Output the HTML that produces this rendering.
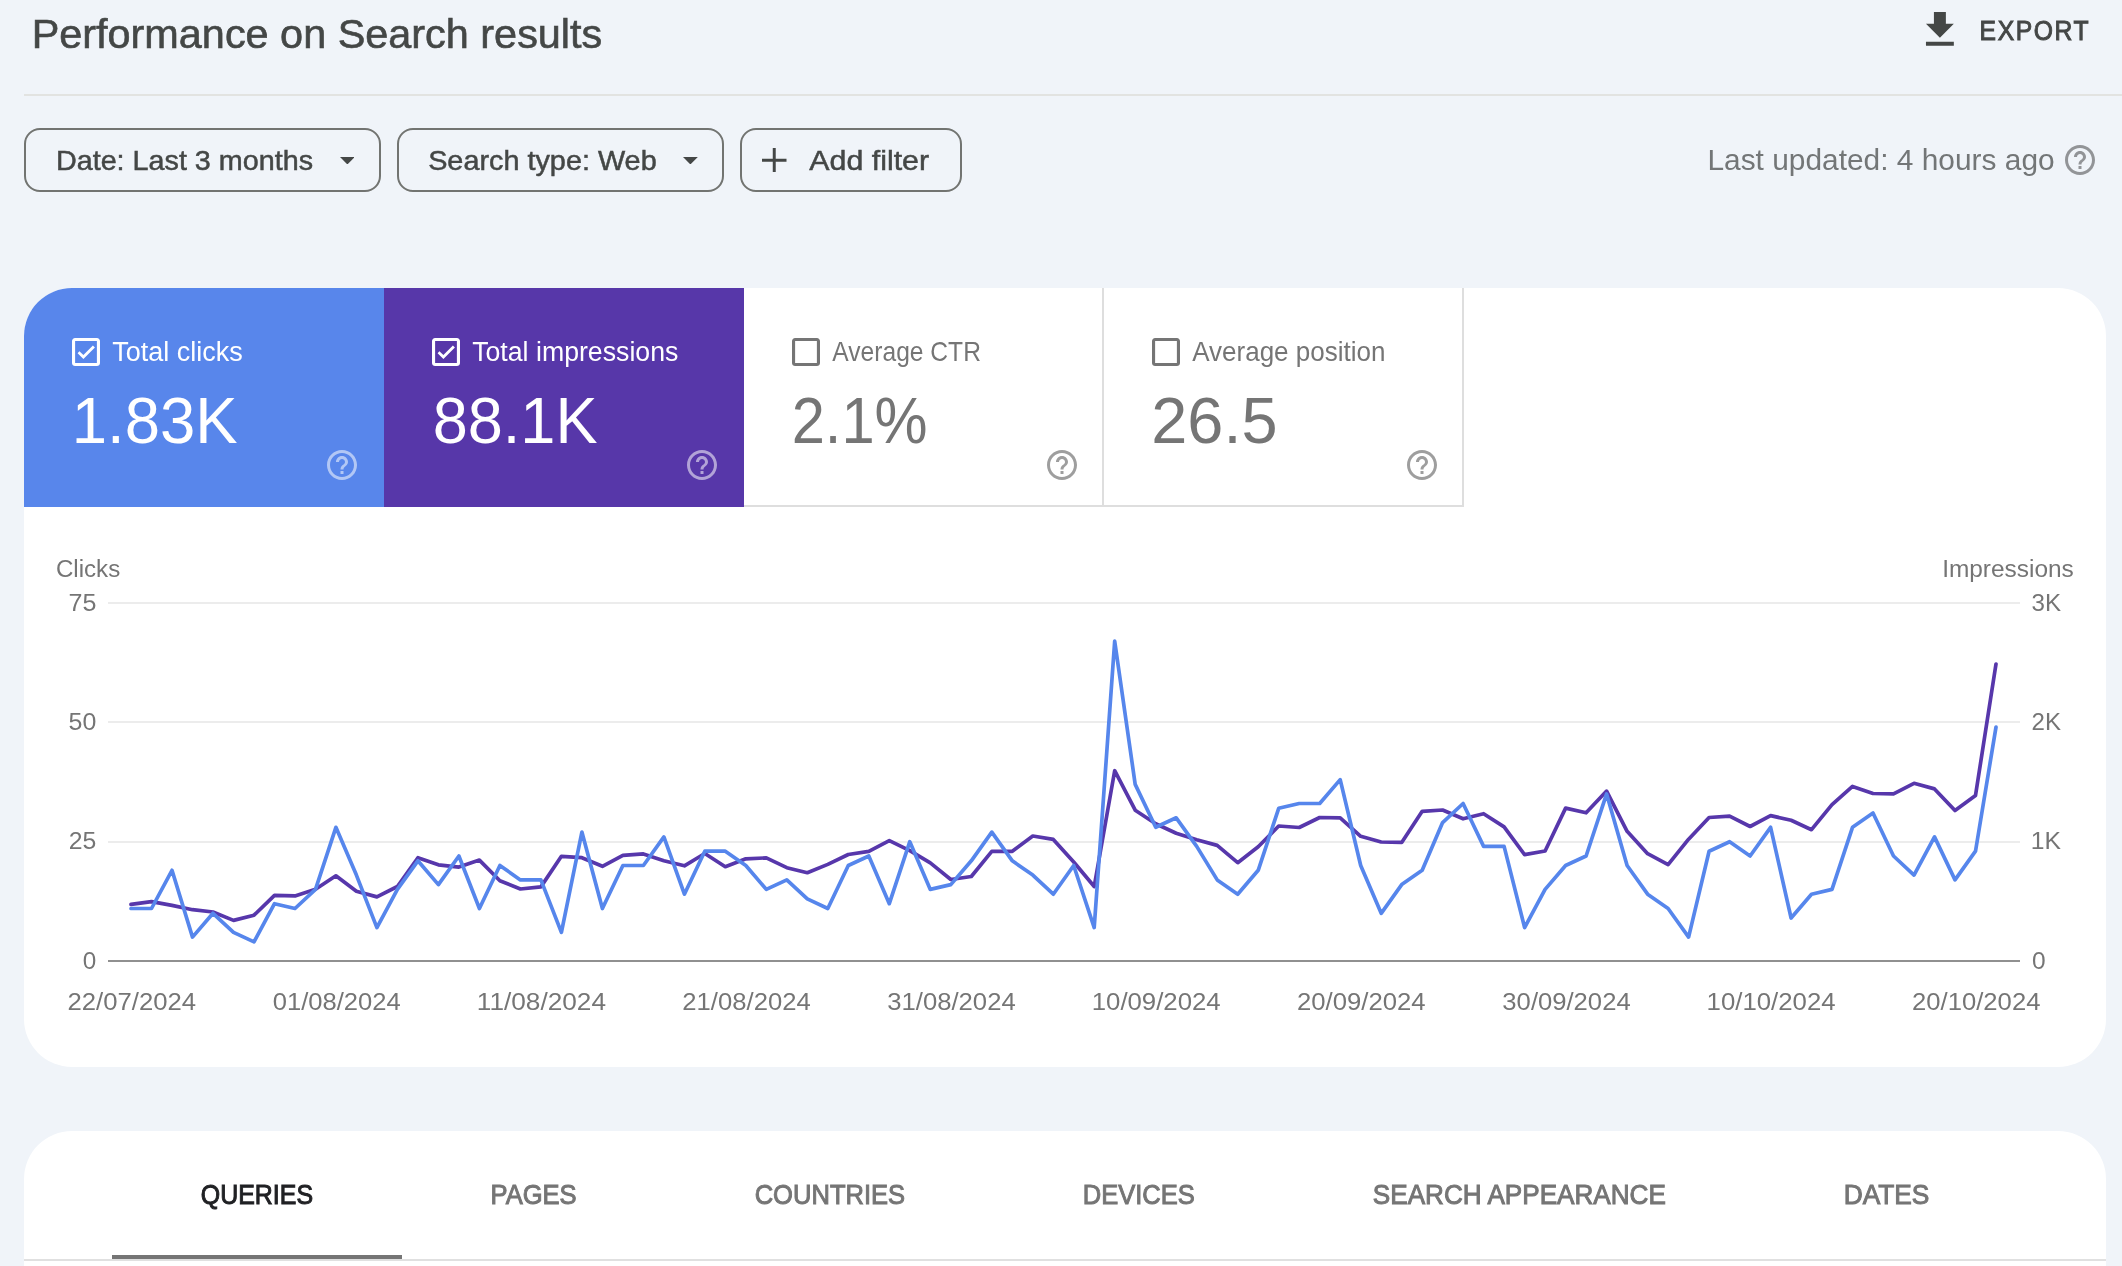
<!DOCTYPE html>
<html><head><meta charset="utf-8"><title>Performance on Search results</title>
<style>
html,body{margin:0;padding:0;}
html{width:2122px;height:1266px;overflow:hidden;background:#f0f4f9;}
body{width:2122px;height:1266px;overflow:hidden;background:#f0f4f9;position:relative;font-family:"Liberation Sans", sans-serif;}
.a{position:absolute;display:block;}
.chip{position:absolute;top:128px;height:60px;border:2px solid #727471;border-radius:16px;box-sizing:content-box;}
.card{position:absolute;left:24px;width:2082px;background:#fff;border-radius:48px;}
</style></head><body>
<div class="a" style="left:24px;top:94px;width:2098px;height:2px;background:#e2e3e1"></div>

<!-- export icon -->
<svg class="a" style="left:1915.6px;top:6.15px" width="47.8" height="47.6" viewBox="0 0 24 24" preserveAspectRatio="none"><path fill="#444746" d="M19 9h-4V3H9v6H5l7 7 7-7zM5 18v2h14v-2H5z"/></svg>

<!-- chips -->
<div class="chip" style="left:24px;width:353px"></div>
<div class="chip" style="left:397px;width:323px"></div>
<div class="chip" style="left:740px;width:218px"></div>
<svg class="a" style="left:339.5px;top:156.9px" width="14.8" height="7.5" viewBox="0 0 10 5"><path fill="#444746" d="M0 0h10L5 5z"/></svg>
<svg class="a" style="left:683.2px;top:156.9px" width="14.8" height="7.5" viewBox="0 0 10 5"><path fill="#444746" d="M0 0h10L5 5z"/></svg>
<svg class="a" style="left:762.2px;top:147.8px" width="24.5" height="24.5" viewBox="0 0 24 24"><path fill="#444746" d="M10.550 0h2.900v10.550H24v2.900H13.450V24h-2.900V13.450H0v-2.900h10.550z"/></svg>

<!-- card 1 -->
<div class="card" style="top:288px;height:779px;overflow:hidden">
  <div class="a" style="left:0;top:0;width:360px;height:219px;background:#5886eb"></div>
  <div class="a" style="left:360px;top:0;width:360px;height:219px;background:#5737a9"></div>
  <div class="a" style="left:720px;top:0;width:718px;height:217px;border-right:2px solid #dedede;border-bottom:2px solid #dedede"></div>
  <div class="a" style="left:1078px;top:0;width:2px;height:217px;background:#dedede"></div>
</div>
<!-- card 2 -->
<div class="card" style="top:1131px;height:135px;border-radius:48px 48px 0 0"></div>
<div class="a" style="left:24px;top:1259px;width:2082px;height:2px;background:#e0e0e0"></div>
<div class="a" style="left:112px;top:1255px;width:290px;height:4px;background:#757575"></div>

<!-- chart -->
<svg class="a" style="left:0;top:0" width="2122" height="1266" viewBox="0 0 2122 1266">
  <g fill="#ececec">
    <rect x="108" y="602" width="1912" height="2"/>
    <rect x="108" y="721" width="1912" height="2"/>
    <rect x="108" y="841" width="1912" height="2"/>
  </g>
  <rect x="108" y="960" width="1912" height="2" fill="#909090"/>
  <polyline fill="none" stroke="#5737ab" stroke-width="3.7" stroke-linejoin="round" stroke-linecap="round" points="131.0,904.4 151.5,901.6 172.0,905.4 192.5,909.7 213.0,912.0 233.5,920.4 254.0,915.2 274.5,895.4 295.0,895.9 315.5,889.3 335.9,875.8 356.4,891.2 376.9,896.9 397.4,886.5 417.9,857.7 438.4,864.8 458.9,867.1 479.4,860.1 499.9,880.8 520.4,889.0 540.9,886.9 561.4,856.3 581.9,857.7 602.4,866.3 622.9,855.4 643.4,853.9 663.9,860.7 684.4,865.8 704.8,853.5 725.3,866.7 745.8,858.8 766.3,857.9 786.8,867.7 807.3,872.7 827.8,864.4 848.3,854.5 868.8,851.3 889.3,840.7 909.8,850.7 930.3,862.9 950.8,879.5 971.3,876.5 991.8,851.3 1012.3,851.3 1032.8,836.0 1053.3,839.4 1073.7,862.0 1094.2,886.5 1114.7,770.7 1135.2,810.2 1155.7,823.7 1176.2,833.3 1196.7,839.8 1217.2,845.4 1237.7,862.7 1258.2,846.7 1278.7,826.0 1299.2,827.5 1319.7,817.5 1340.2,817.9 1360.7,836.3 1381.2,842.0 1401.7,842.4 1422.2,811.3 1442.6,810.0 1463.1,818.8 1483.6,813.7 1504.1,826.9 1524.6,854.6 1545.1,851.0 1565.6,808.1 1586.1,812.8 1606.6,791.1 1627.1,831.3 1647.6,853.7 1668.1,864.6 1688.6,839.2 1709.1,817.5 1729.6,816.2 1750.1,826.5 1770.6,815.6 1791.1,820.3 1811.5,829.7 1832.0,804.7 1852.5,786.4 1873.0,793.5 1893.5,793.8 1914.0,783.3 1934.5,788.9 1955.0,810.6 1975.5,795.5 1996.0,664.0"/>
  <polyline fill="none" stroke="#5686ec" stroke-width="3.7" stroke-linejoin="round" stroke-linecap="round" points="131.0,908.5 151.5,908.5 172.0,870.3 192.5,937.1 213.0,913.3 233.5,932.4 254.0,941.9 274.5,903.7 295.0,908.5 315.5,889.4 335.9,827.3 356.4,875.1 376.9,927.6 397.4,889.4 417.9,860.8 438.4,884.6 458.9,856.0 479.4,908.5 499.9,865.5 520.4,879.9 540.9,879.9 561.4,932.4 581.9,832.1 602.4,908.5 622.9,865.5 643.4,865.5 663.9,836.9 684.4,894.2 704.8,851.2 725.3,851.2 745.8,865.5 766.3,889.4 786.8,879.9 807.3,898.9 827.8,908.5 848.3,865.5 868.8,856.0 889.3,903.7 909.8,841.7 930.3,889.4 950.8,884.6 971.3,860.8 991.8,832.1 1012.3,860.8 1032.8,875.1 1053.3,894.2 1073.7,865.5 1094.2,927.6 1114.7,641.2 1135.2,784.4 1155.7,827.3 1176.2,817.8 1196.7,846.4 1217.2,879.9 1237.7,894.2 1258.2,870.3 1278.7,808.3 1299.2,803.5 1319.7,803.5 1340.2,779.6 1360.7,865.5 1381.2,913.3 1401.7,884.6 1422.2,870.3 1442.6,822.6 1463.1,803.5 1483.6,846.4 1504.1,846.4 1524.6,927.6 1545.1,889.4 1565.6,865.5 1586.1,856.0 1606.6,793.9 1627.1,865.5 1647.6,894.2 1668.1,908.5 1688.6,937.1 1709.1,851.2 1729.6,841.7 1750.1,856.0 1770.6,827.3 1791.1,918.0 1811.5,894.2 1832.0,889.4 1852.5,827.3 1873.0,813.0 1893.5,856.0 1914.0,875.1 1934.5,836.9 1955.0,879.9 1975.5,851.2 1996.0,727.1"/>
</svg>
<svg class="a" style="left:72.0px;top:338.0px" width="28" height="28" viewBox="3 3 18 18"><path fill="#ffffff" d="M19 3H5c-1.11 0-2 .9-2 2v14c0 1.1.89 2 2 2h14c1.11 0 2-.9 2-2V5c0-1.1-.89-2-2-2zm0 16H5V5h14v14zM17.72 9.11 16.44 7.89 10.33 13.86 7.76 11.55 6.60 12.77 10.33 16.56z"/></svg><svg class="a" style="left:432.0px;top:338.0px" width="28" height="28" viewBox="3 3 18 18"><path fill="#ffffff" d="M19 3H5c-1.11 0-2 .9-2 2v14c0 1.1.89 2 2 2h14c1.11 0 2-.9 2-2V5c0-1.1-.89-2-2-2zm0 16H5V5h14v14zM17.72 9.11 16.44 7.89 10.33 13.86 7.76 11.55 6.60 12.77 10.33 16.56z"/></svg><svg class="a" style="left:792.0px;top:338.0px" width="28" height="28" viewBox="3 3 18 18"><path fill="#757575" d="M19 5v14H5V5h14m0-2H5c-1.1 0-2 .9-2 2v14c0 1.1.9 2 2 2h14c1.1 0 2-.9 2-2V5c0-1.1-.9-2-2-2z"/></svg><svg class="a" style="left:1152.0px;top:338.0px" width="28" height="28" viewBox="3 3 18 18"><path fill="#757575" d="M19 5v14H5V5h14m0-2H5c-1.1 0-2 .9-2 2v14c0 1.1.9 2 2 2h14c1.1 0 2-.9 2-2V5c0-1.1-.9-2-2-2z"/></svg><svg class="a" style="left:324.0px;top:447.0px;opacity:0.54" width="36" height="36" viewBox="0 0 24 24"><path fill="#ffffff" d="M11 18h2v-2h-2v2zm1-16C6.48 2 2 6.48 2 12s4.48 10 10 10 10-4.48 10-10S17.52 2 12 2zm0 18c-4.41 0-8-3.59-8-8s3.590-8 8-8 8 3.590 8 8-3.590 8-8 8zm0-14c-2.210 0-4 1.790-4 4h2c0-1.100.9-2 2-2s2 .9 2 2c0 2-3 1.750-3 5h2c0-2.250 3-2.500 3-5 0-2.210-1.790-4-4-4z"/></svg><svg class="a" style="left:684.0px;top:447.0px;opacity:0.54" width="36" height="36" viewBox="0 0 24 24"><path fill="#ffffff" d="M11 18h2v-2h-2v2zm1-16C6.48 2 2 6.48 2 12s4.48 10 10 10 10-4.48 10-10S17.52 2 12 2zm0 18c-4.41 0-8-3.59-8-8s3.590-8 8-8 8 3.590 8 8-3.590 8-8 8zm0-14c-2.210 0-4 1.790-4 4h2c0-1.100.9-2 2-2s2 .9 2 2c0 2-3 1.750-3 5h2c0-2.250 3-2.500 3-5 0-2.210-1.790-4-4-4z"/></svg><svg class="a" style="left:1044.0px;top:447.0px;opacity:1.00" width="36" height="36" viewBox="0 0 24 24"><path fill="#9e9e9e" d="M11 18h2v-2h-2v2zm1-16C6.48 2 2 6.48 2 12s4.48 10 10 10 10-4.48 10-10S17.52 2 12 2zm0 18c-4.41 0-8-3.59-8-8s3.590-8 8-8 8 3.590 8 8-3.590 8-8 8zm0-14c-2.210 0-4 1.790-4 4h2c0-1.100.9-2 2-2s2 .9 2 2c0 2-3 1.750-3 5h2c0-2.250 3-2.500 3-5 0-2.210-1.790-4-4-4z"/></svg><svg class="a" style="left:1404.0px;top:447.0px;opacity:1.00" width="36" height="36" viewBox="0 0 24 24"><path fill="#9e9e9e" d="M11 18h2v-2h-2v2zm1-16C6.48 2 2 6.48 2 12s4.48 10 10 10 10-4.48 10-10S17.52 2 12 2zm0 18c-4.41 0-8-3.59-8-8s3.590-8 8-8 8 3.590 8 8-3.590 8-8 8zm0-14c-2.210 0-4 1.790-4 4h2c0-1.100.9-2 2-2s2 .9 2 2c0 2-3 1.750-3 5h2c0-2.250 3-2.500 3-5 0-2.210-1.790-4-4-4z"/></svg><svg class="a" style="left:2062.0px;top:141.9px;opacity:1.00" width="36" height="36" viewBox="0 0 24 24"><path fill="#929497" d="M11 18h2v-2h-2v2zm1-16C6.48 2 2 6.48 2 12s4.48 10 10 10 10-4.48 10-10S17.52 2 12 2zm0 18c-4.41 0-8-3.59-8-8s3.590-8 8-8 8 3.590 8 8-3.590 8-8 8zm0-14c-2.210 0-4 1.790-4 4h2c0-1.100.9-2 2-2s2 .9 2 2c0 2-3 1.750-3 5h2c0-2.250 3-2.500 3-5 0-2.210-1.790-4-4-4z"/></svg>
<svg class="a" style="left:0;top:0;will-change:transform" width="2122" height="1266" viewBox="0 0 2122 1266" font-family='"Liberation Sans", sans-serif'>
<text transform="translate(31.63 48) scale(1.0197 1)" font-size="40.60" fill="#444746" stroke="#444746" stroke-width="0.60">Performance on Search results</text>
<text transform="translate(1979.60 40) scale(0.8827 1)" font-size="28.00" fill="#444746" stroke="#444746" stroke-width="1.00" letter-spacing="1.80">EXPORT</text>
<text transform="translate(55.92 170) scale(1.0085 1)" font-size="28.50" fill="#444746" stroke="#444746" stroke-width="0.50">Date: Last 3 months</text>
<text transform="translate(428.13 170) scale(1.0114 1)" font-size="28.50" fill="#444746" stroke="#444746" stroke-width="0.50">Search type: Web</text>
<text transform="translate(809.33 170) scale(1.0651 1)" font-size="28.50" fill="#444746" stroke="#444746" stroke-width="0.50">Add filter</text>
<text transform="translate(1707.40 170) scale(0.9962 1)" font-size="30.00" fill="#737677">Last updated: 4 hours ago</text>
<text transform="translate(112.21 361) scale(1.0011 1)" font-size="27.00" fill="#ffffff">Total clicks</text>
<text transform="translate(71.80 443) scale(0.9763 1)" font-size="65.00" fill="#ffffff">1.83K</text>
<text transform="translate(472.16 361) scale(0.9889 1)" font-size="27.00" fill="#ffffff">Total impressions</text>
<text transform="translate(432.64 443) scale(0.9708 1)" font-size="65.00" fill="#ffffff">88.1K</text>
<text transform="translate(832.30 361) scale(0.9114 1)" font-size="27.00" fill="#757575">Average CTR</text>
<text transform="translate(791.63 443) scale(0.9180 1)" font-size="65.00" fill="#757575">2.1%</text>
<text transform="translate(1192.21 361) scale(0.9630 1)" font-size="27.00" fill="#757575">Average position</text>
<text transform="translate(1151.29 443) scale(0.9983 1)" font-size="65.00" fill="#757575">26.5</text>
<text transform="translate(55.88 577) scale(0.9813 1)" font-size="24.60" fill="#757575">Clicks</text>
<text transform="translate(1942.14 577) scale(0.9933 1)" font-size="24.60" fill="#757575">Impressions</text>
<text transform="translate(68.49 611) scale(1.0192 1)" font-size="24.60" fill="#757575">75</text>
<text transform="translate(68.57 730) scale(1.0143 1)" font-size="24.60" fill="#757575">50</text>
<text transform="translate(68.67 849) scale(1.0075 1)" font-size="24.60" fill="#757575">25</text>
<text transform="translate(82.73 969) scale(0.9885 1)" font-size="24.60" fill="#757575">0</text>
<text transform="translate(2031.54 611) scale(0.9825 1)" font-size="24.60" fill="#757575">3K</text>
<text transform="translate(2031.56 730) scale(0.9785 1)" font-size="24.60" fill="#757575">2K</text>
<text transform="translate(2030.84 849) scale(1.0038 1)" font-size="24.60" fill="#757575">1K</text>
<text transform="translate(2031.89 969) scale(0.9969 1)" font-size="24.60" fill="#757575">0</text>
<text transform="translate(200.85 1204) scale(0.8904 1)" font-size="28.00" fill="#202124" stroke="#202124" stroke-width="1.00">QUERIES</text>
<text transform="translate(490.51 1204) scale(0.9123 1)" font-size="28.00" fill="#757575" stroke="#757575" stroke-width="1.00">PAGES</text>
<text transform="translate(754.67 1204) scale(0.9125 1)" font-size="28.00" fill="#757575" stroke="#757575" stroke-width="1.00">COUNTRIES</text>
<text transform="translate(1082.78 1204) scale(0.9117 1)" font-size="28.00" fill="#757575" stroke="#757575" stroke-width="1.00">DEVICES</text>
<text transform="translate(1372.83 1204) scale(0.9328 1)" font-size="28.00" fill="#757575" stroke="#757575" stroke-width="1.00">SEARCH APPEARANCE</text>
<text transform="translate(1843.65 1204) scale(0.9399 1)" font-size="28.00" fill="#757575" stroke="#757575" stroke-width="1.00">DATES</text>
<text transform="translate(67.51 1010) scale(1.0449 1)" font-size="24.60" fill="#757575">22/07/2024</text>
<text transform="translate(272.80 1010) scale(1.0397 1)" font-size="24.60" fill="#757575">01/08/2024</text>
<text transform="translate(476.78 1010) scale(1.0659 1)" font-size="24.60" fill="#757575">11/08/2024</text>
<text transform="translate(682.34 1010) scale(1.0432 1)" font-size="24.60" fill="#757575">21/08/2024</text>
<text transform="translate(887.25 1010) scale(1.0442 1)" font-size="24.60" fill="#757575">31/08/2024</text>
<text transform="translate(1091.71 1010) scale(1.0483 1)" font-size="24.60" fill="#757575">10/09/2024</text>
<text transform="translate(1296.98 1010) scale(1.0443 1)" font-size="24.60" fill="#757575">20/09/2024</text>
<text transform="translate(1502.37 1010) scale(1.0426 1)" font-size="24.60" fill="#757575">30/09/2024</text>
<text transform="translate(1706.58 1010) scale(1.0482 1)" font-size="24.60" fill="#757575">10/10/2024</text>
<text transform="translate(1912.06 1010) scale(1.0427 1)" font-size="24.60" fill="#757575">20/10/2024</text>
</svg>
</body></html>
